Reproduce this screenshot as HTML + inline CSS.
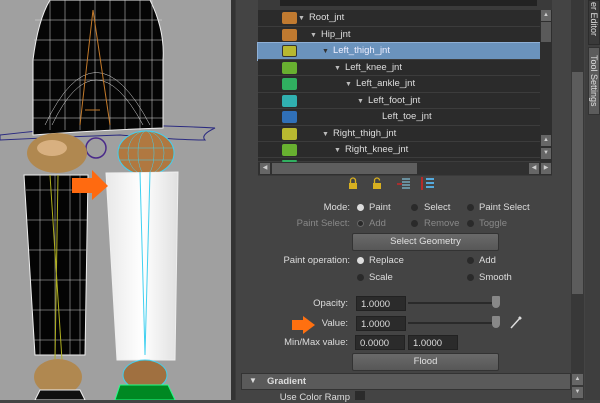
<!DOCTYPE html>
<html><head><meta charset="utf-8"><style>
*{margin:0;padding:0;box-sizing:border-box}
body{width:600px;height:400px;overflow:hidden;background:#444;font-family:"Liberation Sans",sans-serif;font-size:9.5px;color:#ddd;position:relative}
.a{position:absolute}
.row{position:absolute;left:258px;width:282px;height:16.5px;border-bottom:1px solid #3c3c3c;background:#2b2b2b}
.row.sel{background:#6b93bd;outline:1px solid #8fb0d6}
.sw{position:absolute;left:24px;top:2px;width:15px;height:12px;border-radius:2px}
.lbl{position:absolute;top:2px;white-space:nowrap;color:#ddd}
.tri{font-size:7px;color:#bbb;margin-right:4px}
.lab{position:absolute;text-align:right;white-space:nowrap}
.rad{position:absolute;width:7px;height:7px;border-radius:50%;background:#2a2a2a}
.rad.on{background:#ddd}
.fld{position:absolute;background:#2b2b2b;height:14px;padding:2px 4px;color:#ddd;border:1px solid #222}
.btn{position:absolute;background:linear-gradient(#6a6a6a,#575757);border:1px solid #333;border-radius:2px;text-align:center;color:#e0e0e0;line-height:16px}
.dim{color:#888}
</style></head><body>
<!-- viewport -->
<div class="a" style="left:0;top:0;width:231px;height:400px;background:#a0a0a0;overflow:hidden">
<svg width="231" height="400" viewBox="0 0 231 400">
<path d="M0 135 Q60 128 120 125 Q180 126 215 128 Q200 135 205 140 Q180 140 120 135 Q60 137 0 140Z" fill="none" stroke="#2a2a80" stroke-width="1"/>
<path d="M50 0 L150 0 Q165 30 163 60 L163 128 Q100 130 33 135 L33 60 Q38 20 50 0Z" fill="#050505" stroke="#eee" stroke-width="1"/>
<g stroke="#ddd" stroke-width="0.5" fill="none">
<path d="M35 20 H162 M34 40 H163 M33 60 H163 M33 80 H163 M33 100 H163 M33 118 H163"/>
<path d="M50 0 V130 M65 0 V130 M80 0 V130 M95 0 V130 M110 0 V130 M125 0 V130 M140 0 V130 M152 0 V128"/>
<path d="M45 125 Q95 20 150 125 M52 125 Q95 35 143 125"/>
</g>
<path d="M93 10 L80 125 M93 10 L110 125 M85 110 L100 110" stroke="#c47a2a" stroke-width="1" fill="none"/>
<circle cx="96" cy="148" r="10" fill="none" stroke="#4a2a8a" stroke-width="1.5"/>
<ellipse cx="57" cy="153" rx="30" ry="20" fill="#b08850"/>
<ellipse cx="52" cy="148" rx="15" ry="8" fill="#d8b080"/>
<path d="M24 175 L88 175 L85 355 L35 355Z" fill="#040404" stroke="#eee"/>
<g stroke="#ccc" stroke-width="0.5"><path d="M26 190 H88 M27 220 H87 M29 250 H86 M31 280 H86 M33 310 H85 M34 340 H85 M40 175 V355 M55 175 V355 M70 175 V355 M80 175 V355"/></g>
<path d="M58 175 L55 360 M50 175 L62 360" stroke="#b0b020" stroke-width="1"/>
<ellipse cx="146" cy="153" rx="28" ry="22" fill="#b07840" stroke="#40d0f0"/>
<g stroke="#40d0f0" stroke-width="0.5" fill="none"><ellipse cx="146" cy="153" rx="18" ry="22"/><ellipse cx="146" cy="153" rx="8" ry="22"/><path d="M118 148 H174 M120 160 H172"/></g>
<defs><linearGradient id="g" x1="0" x2="1"><stop offset="0" stop-color="#e8e8e8"/><stop offset=".5" stop-color="#fff"/><stop offset="1" stop-color="#e0e0e0"/></linearGradient></defs>
<path d="M106 173 L178 172 L175 360 L117 360Z" fill="url(#g)" stroke="#eee"/>
<path d="M140 172 L145 355 L150 172" stroke="#40d0f0" fill="none"/>
<ellipse cx="58" cy="377" rx="24" ry="18" fill="#b08850"/>
<path d="M40 390 L80 390 L85 400 L35 400Z" fill="#101010" stroke="#eee"/>
<ellipse cx="145" cy="375" rx="22" ry="15" fill="#a07040" stroke="#40d0f0"/>
<path d="M120 385 L168 385 L175 400 L115 400Z" fill="#082" stroke="#2f8"/>
<path d="M72 178 H92 V170 L108 186 L92 200 V193 H72Z" fill="#ff6a10"/>
</svg>
</div>
<div class="a" style="left:231px;top:0;width:4px;height:400px;background:#333"></div>
<div class="a" style="left:235px;top:0;width:350px;height:400px;background:#444;border-left:1px solid #3a3a3a"></div>
<!-- outliner -->
<div class="a" style="left:258px;top:0;width:294px;height:176px;background:#3a3a3a"></div>
<div class="a" style="left:280px;top:0;width:257px;height:6px;background:#222"></div>
<div class="row" style="top:10px"><div class="sw" style="background:#c07a30"></div><div class="lbl" style="left:40px"><span class="tri">▼</span>Root_jnt</div></div>
<div class="row" style="top:26.5px"><div class="sw" style="background:#c07a30"></div><div class="lbl" style="left:52px"><span class="tri">▼</span>Hip_jnt</div></div>
<div class="row sel" style="top:43px"><div class="sw" style="background:#b8b830;border:1px solid #333"></div><div class="lbl" style="left:64px;color:#eef"><span class="tri" style="color:#333">▼</span>Left_thigh_jnt</div></div>
<div class="row" style="top:59.5px"><div class="sw" style="background:#68b030"></div><div class="lbl" style="left:76px"><span class="tri">▼</span>Left_knee_jnt</div></div>
<div class="row" style="top:76px"><div class="sw" style="background:#30b060"></div><div class="lbl" style="left:87px"><span class="tri">▼</span>Left_ankle_jnt</div></div>
<div class="row" style="top:92.5px"><div class="sw" style="background:#30b0b0"></div><div class="lbl" style="left:99px"><span class="tri">▼</span>Left_foot_jnt</div></div>
<div class="row" style="top:109px"><div class="sw" style="background:#3070b8"></div><div class="lbl" style="left:124px">Left_toe_jnt</div></div>
<div class="row" style="top:125.5px"><div class="sw" style="background:#b8b830"></div><div class="lbl" style="left:64px"><span class="tri">▼</span>Right_thigh_jnt</div></div>
<div class="row" style="top:142px;height:16px"><div class="sw" style="background:#68b030"></div><div class="lbl" style="left:76px"><span class="tri">▼</span>Right_knee_jnt</div></div>
<div class="row" style="top:158px;height:4px"><div class="sw" style="background:#30b060;height:2px"></div></div>
<div class="a" style="left:540px;top:10px;width:12px;height:152px;background:#2e2e2e"></div>
<div class="a" style="left:541px;top:10px;width:10px;height:11px;background:#666;color:#ccc;font-size:6px;text-align:center;line-height:11px">▲</div>
<div class="a" style="left:541px;top:22px;width:10px;height:20px;background:#5a5a5a"></div>
<div class="a" style="left:541px;top:135px;width:10px;height:11px;background:#666;color:#ccc;font-size:6px;text-align:center;line-height:11px">▲</div>
<div class="a" style="left:541px;top:148px;width:10px;height:11px;background:#666;color:#ccc;font-size:6px;text-align:center;line-height:11px">▼</div>
<div class="a" style="left:258px;top:162px;width:294px;height:13px;background:#303030"></div>
<div class="a" style="left:260px;top:163px;width:10px;height:11px;background:#666;color:#ccc;font-size:6px;text-align:center;line-height:11px">◀</div>
<div class="a" style="left:272px;top:163px;width:145px;height:11px;background:#5e5e5e"></div>
<div class="a" style="left:529px;top:163px;width:10px;height:11px;background:#666;color:#ccc;font-size:6px;text-align:center;line-height:11px">◀</div>
<div class="a" style="left:541px;top:163px;width:10px;height:11px;background:#666;color:#ccc;font-size:6px;text-align:center;line-height:11px">▶</div>
<!-- icons -->
<svg class="a" style="left:345px;top:176px" width="100" height="16">
<rect x="4" y="7" width="8" height="6" fill="#d8b020"/><path d="M5.5 7 V4.5 a2.5 2.5 0 0 1 5 0 V7" stroke="#d8b020" fill="none" stroke-width="1.3"/>
<rect x="28" y="7" width="8" height="6" fill="#d8b020"/><path d="M29.5 7 V4.5 a2.5 2.5 0 0 1 5 0" stroke="#d8b020" fill="none" stroke-width="1.3"/>
<path d="M52 8 H57" stroke="#d22" stroke-width="1.3"/><path d="M57 3 H65 M57 6 H65 M57 9 H65 M57 12 H65" stroke="#7ab" stroke-width="1.5"/>
<path d="M77 1 V14" stroke="#d22" stroke-width="1.5"/><path d="M81 3 H89 M81 7 H89 M81 11 H89" stroke="#5ad" stroke-width="2"/>
</svg>
<!-- settings -->
<div class="lab" style="right:250px;top:202px">Mode:</div>
<div class="rad on" style="left:357px;top:204px"></div><div class="lab" style="left:369px;top:202px">Paint</div>
<div class="rad" style="left:411px;top:204px"></div><div class="lab" style="left:424px;top:202px">Select</div>
<div class="rad" style="left:467px;top:204px"></div><div class="lab" style="left:479px;top:202px">Paint Select</div>
<div class="lab dim" style="right:250px;top:218px">Paint Select:</div>
<div class="rad" style="left:357px;top:220px;border:1px solid #666"></div><div class="lab dim" style="left:369px;top:218px">Add</div>
<div class="rad" style="left:411px;top:220px"></div><div class="lab dim" style="left:424px;top:218px">Remove</div>
<div class="rad" style="left:467px;top:220px"></div><div class="lab dim" style="left:479px;top:218px">Toggle</div>
<div class="btn" style="left:352px;top:233px;width:147px;height:18px">Select Geometry</div>
<div class="lab" style="right:250px;top:255px">Paint operation:</div>
<div class="rad on" style="left:357px;top:257px"></div><div class="lab" style="left:369px;top:255px">Replace</div>
<div class="rad" style="left:467px;top:257px"></div><div class="lab" style="left:479px;top:255px">Add</div>
<div class="rad" style="left:357px;top:274px"></div><div class="lab" style="left:369px;top:272px">Scale</div>
<div class="rad" style="left:467px;top:274px"></div><div class="lab" style="left:479px;top:272px">Smooth</div>
<div class="lab" style="right:252px;top:298px">Opacity:</div>
<div class="fld" style="left:356px;top:296px;width:50px;height:15px">1.0000</div>
<div class="a" style="left:408px;top:302px;width:92px;height:2px;background:#2a2a2a"></div>
<div class="a" style="left:492px;top:296px;width:8px;height:12px;background:#888;border-radius:1px 1px 4px 4px"></div>
<div class="lab" style="right:252px;top:318px">Value:</div>
<div class="a" style="left:292px;top:320px;width:12px;height:10px;background:#ff7010"></div>
<div class="a" style="left:303px;top:316px;border-left:12px solid #ff7010;border-top:9px solid transparent;border-bottom:9px solid transparent;width:0;height:0"></div>
<div class="fld" style="left:356px;top:316px;width:50px;height:15px">1.0000</div>
<div class="a" style="left:408px;top:322px;width:92px;height:2px;background:#2a2a2a"></div>
<div class="a" style="left:492px;top:316px;width:8px;height:12px;background:#888;border-radius:1px 1px 4px 4px"></div>
<svg class="a" style="left:508px;top:314px" width="16" height="16"><path d="M3 14 L12 4" stroke="#ddd" stroke-width="1.5"/><path d="M11 3 L13 5" stroke="#ddd" stroke-width="2.5"/></svg>
<div class="lab" style="right:252px;top:337px">Min/Max value:</div>
<div class="fld" style="left:355px;top:335px;width:50px;height:15px">0.0000</div>
<div class="fld" style="left:408px;top:335px;width:50px;height:15px">1.0000</div>
<div class="btn" style="left:352px;top:353px;width:147px;height:18px">Flood</div>
<div class="a" style="left:241px;top:373px;width:330px;height:17px;background:#5a5a5a;border:1px solid #333"></div>
<div class="lab" style="left:249px;top:376px;font-size:8px">▼</div>
<div class="lab" style="left:267px;top:376px;font-weight:bold">Gradient</div>
<div class="lab" style="right:250px;top:392px">Use Color Ramp</div>
<div class="a" style="left:355px;top:391px;width:10px;height:9px;background:#2b2b2b"></div>
<!-- right scrollbar -->
<div class="a" style="left:571px;top:0;width:13px;height:400px;background:#383838"></div>
<div class="a" style="left:572px;top:72px;width:11px;height:222px;background:#5c5c5c"></div>
<div class="a" style="left:572px;top:374px;width:11px;height:11px;background:#666;color:#ccc;font-size:6px;text-align:center;line-height:11px">▲</div>
<div class="a" style="left:572px;top:387px;width:11px;height:11px;background:#666;color:#ccc;font-size:6px;text-align:center;line-height:11px">▼</div>
<!-- tabs -->
<div class="a" style="left:585px;top:0;width:15px;height:400px;background:#3e3e3e"></div>
<div class="a" style="left:588px;top:0;width:12px;height:45px;background:#3a3a3a;border:1px solid #2c2c2c"></div>
<div class="a" style="left:588px;top:47px;width:12px;height:68px;background:#5c5c5c;border:1px solid #333"></div>
<div class="a" style="left:589px;top:2px;writing-mode:vertical-rl;font-size:9px;color:#ddd">er Editor</div>
<div class="a" style="left:589px;top:55px;writing-mode:vertical-rl;font-size:9px;color:#ddd">Tool Settings</div>
</body></html>
